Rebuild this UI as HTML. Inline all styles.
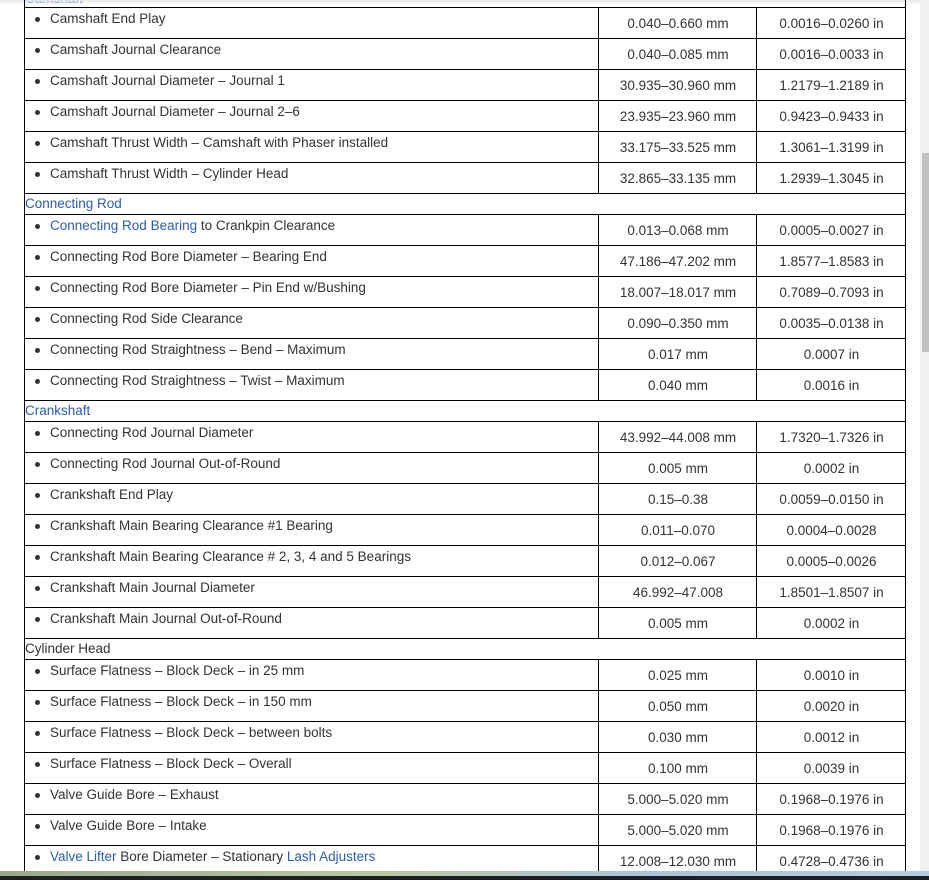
<!DOCTYPE html>
<html><head><meta charset="utf-8"><style>
body{margin:0;width:929px;height:880px;overflow:hidden;background:#fff;font-family:"Liberation Sans",Arial,sans-serif;font-size:13.5px;color:#333;position:relative}
.r{position:absolute;left:24px;width:881px;border-top:1px solid #000;box-sizing:border-box}
.c1,.c2{position:absolute;top:0;bottom:0;border-left:1px solid #000}
.c1{left:574px;width:158px}.c2{left:732px;width:149px}
.lab{position:absolute;left:26px;top:3px;white-space:nowrap}
.lab:before{content:"";position:absolute;left:-15px;top:6px;width:5px;height:5px;border-radius:50%;background:#333}
.v{position:absolute;left:0;right:0;top:8px;text-align:center;white-space:nowrap}
.sec{position:absolute;left:1px;top:2px;white-space:nowrap}
a{color:#2a5db0;text-decoration:none}
.lb{position:absolute;left:24px;top:0;height:880px;border-left:1px solid #000}
.rb{position:absolute;left:905px;top:0;height:880px;border-left:1px solid #000}
</style></head><body>
<div style="position:absolute;left:25px;top:-9px;color:#2a5db0;white-space:nowrap">Camshaft</div>
<div style="position:absolute;left:0;top:0;width:920px;height:5px;background:linear-gradient(#e8e8e8,rgba(255,255,255,0))"></div>
<div class="lb"></div><div class="rb"></div>
<div id="t"></div>
<script>
var rows=[
[7,"Camshaft End Play","0.040–0.660 mm","0.0016–0.0260 in"],
[38,"Camshaft Journal Clearance","0.040–0.085 mm","0.0016–0.0033 in"],
[69,"Camshaft Journal Diameter – Journal 1","30.935–30.960 mm","1.2179–1.2189 in"],
[100,"Camshaft Journal Diameter – Journal 2–6","23.935–23.960 mm","0.9423–0.9433 in"],
[131,"Camshaft Thrust Width – Camshaft with Phaser installed","33.175–33.525 mm","1.3061–1.3199 in"],
[162,"Camshaft Thrust Width – Cylinder Head","32.865–33.135 mm","1.2939–1.3045 in"],
[193,"<a>Connecting Rod</a>"],
[214,"<a>Connecting Rod Bearing</a> to Crankpin Clearance","0.013–0.068 mm","0.0005–0.0027 in"],
[245,"Connecting Rod Bore Diameter – Bearing End","47.186–47.202 mm","1.8577–1.8583 in"],
[276,"Connecting Rod Bore Diameter – Pin End w/Bushing","18.007–18.017 mm","0.7089–0.7093 in"],
[307,"Connecting Rod Side Clearance","0.090–0.350 mm","0.0035–0.0138 in"],
[338,"Connecting Rod Straightness – Bend – Maximum","0.017 mm","0.0007 in"],
[369,"Connecting Rod Straightness – Twist – Maximum","0.040 mm","0.0016 in"],
[400,"<a>Crankshaft</a>"],
[421,"Connecting Rod Journal Diameter","43.992–44.008 mm","1.7320–1.7326 in"],
[452,"Connecting Rod Journal Out-of-Round","0.005 mm","0.0002 in"],
[483,"Crankshaft End Play","0.15–0.38","0.0059–0.0150 in"],
[514,"Crankshaft Main Bearing Clearance #1 Bearing","0.011–0.070","0.0004–0.0028"],
[545,"Crankshaft Main Bearing Clearance # 2, 3, 4 and 5 Bearings","0.012–0.067","0.0005–0.0026"],
[576,"Crankshaft Main Journal Diameter","46.992–47.008","1.8501–1.8507 in"],
[607,"Crankshaft Main Journal Out-of-Round","0.005 mm","0.0002 in"],
[638,"Cylinder Head"],
[659,"Surface Flatness – Block Deck – in 25 mm","0.025 mm","0.0010 in"],
[690,"Surface Flatness – Block Deck – in 150 mm","0.050 mm","0.0020 in"],
[721,"Surface Flatness – Block Deck – between bolts","0.030 mm","0.0012 in"],
[752,"Surface Flatness – Block Deck – Overall","0.100 mm","0.0039 in"],
[783,"Valve Guide Bore – Exhaust","5.000–5.020 mm","0.1968–0.1976 in"],
[814,"Valve Guide Bore – Intake","5.000–5.020 mm","0.1968–0.1976 in"],
[845,"<a>Valve Lifter</a> Bore Diameter – Stationary <a>Lash Adjusters</a>","12.008–12.030 mm","0.4728–0.4736 in"]
];
var h="";
rows.forEach(function(r){
 if(r.length==2){h+='<div class="r" style="top:'+r[0]+'px;height:21px"><div class="sec">'+r[1]+'</div></div>';}
 else{h+='<div class="r" style="top:'+r[0]+'px;height:31px"><div class="lab">'+r[1]+'</div><div class="c1"><div class="v">'+r[2]+'</div></div><div class="c2"><div class="v">'+r[3]+'</div></div></div>';}
});
h+='<div class="r" style="top:876px;height:4px"></div>';
document.getElementById("t").innerHTML=h;
</script>
<div style="position:absolute;left:920px;top:0;width:9px;height:872px;background:#f1f1f1"></div>
<div style="position:absolute;left:922px;top:153px;width:7px;height:199px;background:#c1c1c1"></div>
<div style="position:absolute;left:0;top:871px;width:929px;height:5px;background:linear-gradient(90deg,#9aa88a,#b9c9a0 40%,#a9c4dc 70%,#b4cde0)"></div>
<div style="position:absolute;left:0;top:876px;width:929px;height:4px;background:#1d1f22"></div>
</body></html>
